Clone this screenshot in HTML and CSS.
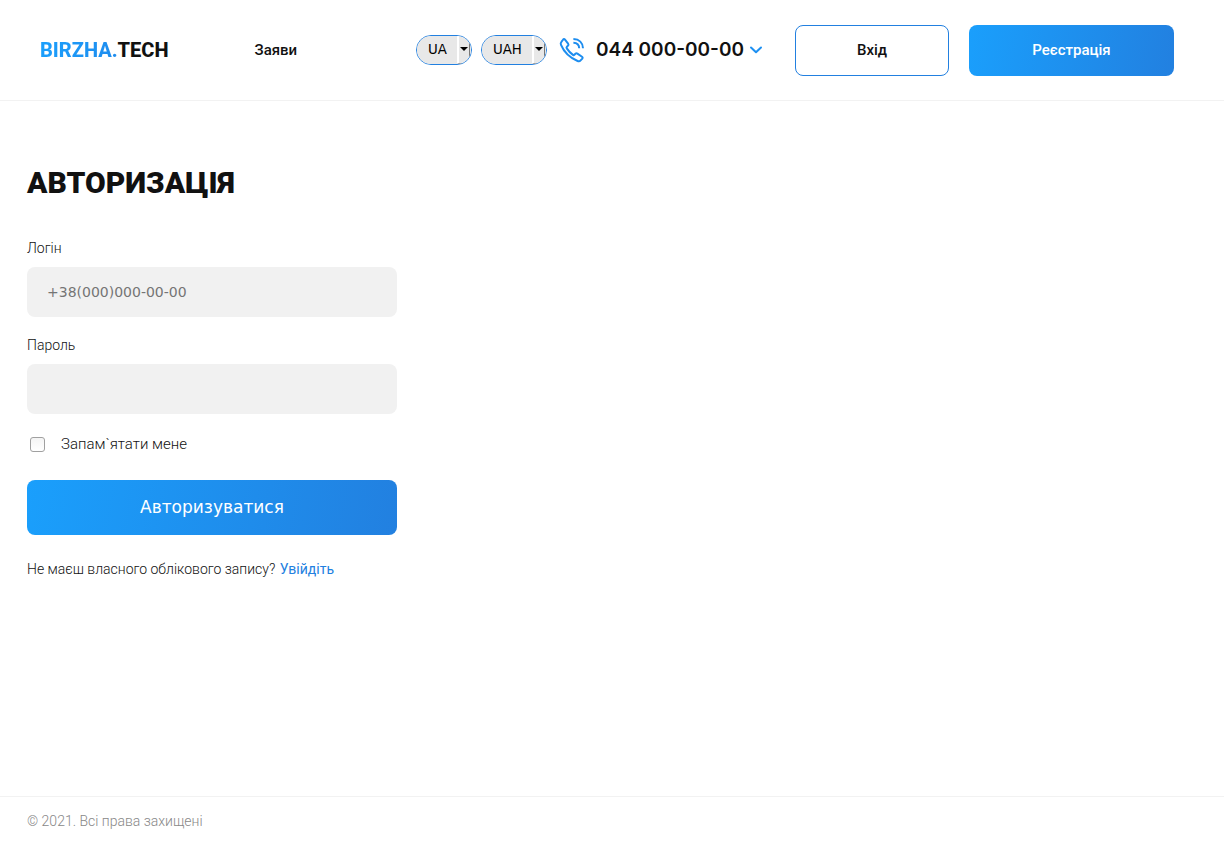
FILE: index.html
```html
<!DOCTYPE html>
<html lang="uk">
<head>
<meta charset="utf-8">
<meta name="viewport" content="width=device-width, initial-scale=1">
<title>Авторизація</title>
<link rel="stylesheet" href="styles.css">
</head>
<body>
<header class="header">
  <a class="logo" href="#"><span class="logo-accent">BIRZHA.</span>TECH</a>
  <nav class="nav"><a class="nav-link" href="#">Заяви</a></nav>
  <div class="tools">
    <div class="pickers">
      <span class="picker picker-lang">
        <select class="picker-select" aria-label="Мова"><option>UA</option><option>RU</option></select>
        <span class="picker-arrow"></span>
      </span>
      <span class="picker picker-currency">
        <select class="picker-select" aria-label="Валюта"><option>UAH</option><option>USD</option></select>
        <span class="picker-arrow"></span>
      </span>
    </div>
    <a class="phone" href="tel:0440000000">
      <svg class="phone-icon" viewBox="0 0 26 26" fill="none" stroke="#1d8def" stroke-width="2" stroke-linecap="round" stroke-linejoin="round" aria-hidden="true">
        <path d="M5.8 2.4 9.1 6.6C9.7 7.4 9.6 8.2 8.9 8.8L7.9 9.7C7.4 10.2 7.4 10.8 7.8 11.4 9.3 13.8 11.4 16 14 17.9 14.5 18.3 15 18.2 15.4 17.8L16.4 16.8C17 16.2 17.7 16.1 18.4 16.6L23 19.8C23.8 20.4 23.8 21 23.3 21.6L21.6 23.4C20.8 24.3 19.8 24.5 18.6 24 10.6 20.6 5.1 15.4 2 7.9 1.5 6.7 1.6 5.7 2.4 4.8L4.2 2.5C4.7 1.9 5.3 1.8 5.8 2.4Z"/>
        <path d="M14.4 2C20.2 2.2 23.8 5.8 24 11.2M14.4 5.8C18 5.9 20.1 8 20.2 11.2" stroke-linecap="butt"/>
      </svg>
      <span class="phone-number">044 000-00-00</span>
      <svg class="phone-chevron" viewBox="0 0 14 8" fill="none" stroke="#1d90f2" stroke-width="2" stroke-linecap="round" stroke-linejoin="round" aria-hidden="true"><path d="M2 1.5 7 6.3 12 1.5"/></svg>
    </a>
  </div>
  <div class="account">
    <button class="button button-outline" type="button">Вхід</button>
    <button class="button button-filled" type="button">Реєстрація</button>
  </div>
</header>
<main class="main">
  <h1 class="title">АВТОРИЗАЦІЯ</h1>
  <form class="form">
    <label class="label" for="login">Логін</label>
    <input class="field" id="login" type="tel" placeholder="+38(000)000-00-00">
    <label class="label" for="password">Пароль</label>
    <input class="field" id="password" type="password">
    <label class="remember" for="remember"><input class="checkbox" id="remember" type="checkbox">Запам`ятати мене</label>
    <button class="submit" type="submit">Авторизуватися</button>
  </form>
  <p class="hint">Не маєш власного облікового запису? <a class="hint-link" href="#">Увійдіть</a></p>
</main>
<footer class="footer">© 2021. Всі права захищені</footer>
</body>
</html>
```
FILE: styles.css
```css
* {
  box-sizing: border-box;
}

body {
  display: flex;
  flex-direction: column;
  min-height: 100vh;
  margin: 0;
  background: #fff;
  color: #111;
  font-family: Roboto, sans-serif;
  font-size: 14px;
  line-height: 20px;
}

a {
  color: inherit;
  text-decoration: none;
}

.header {
  display: flex;
  align-items: center;
  padding: 25px 50px 24px 40px;
  border-bottom: 1px solid #f2f2f2;
}

.logo,
.nav,
.tools {
  margin-bottom: 2px;
}

.logo {
  font-size: 20px;
  font-weight: 800;
}

.logo-accent {
  background: linear-gradient(100deg, #1a9ffc, #1f8cee);
  background-clip: text;
  color: transparent;
}

.nav {
  flex: 1;
  padding-left: 86px;
}

.nav-link {
  font-size: 15px;
  font-weight: 500;
}

.tools {
  display: flex;
  align-items: center;
  gap: 12px;
  margin-right: 32px;
}

.pickers {
  display: flex;
  gap: 9px;
}

.picker {
  position: relative;
  height: 30px;
  overflow: hidden;
  border: 1px solid #2280e0;
  border-radius: 15px;
}

.picker-lang {
  width: 56px;
}

.picker-currency {
  width: 66px;
}

.picker-select {
  width: 100%;
  height: 100%;
  padding: 0 11px;
  border: 0;
  background: #e8e8e8;
  color: #000;
  appearance: none;
  font-family: "DejaVu Sans", sans-serif;
}

.picker-arrow {
  position: absolute;
  inset: 0 1px 0 auto;
  display: grid;
  place-items: center;
  width: 13px;
  border: solid;
  border-width: 0 1px 1px 2px;
  border-color: #fff #777 #888 #fff;
  pointer-events: none;
}

.picker-arrow::before {
  content: "";
  border: 4px solid transparent;
  border-top-color: #000;
  border-bottom: 0;
}

.phone {
  display: flex;
  align-items: center;
}

.phone-icon {
  width: 26px;
  height: 26px;
  margin-right: 11px;
}

.phone-number {
  font-family: Inter, sans-serif;
  font-size: 19px;
  font-weight: 600;
}

.phone-chevron {
  width: 14px;
  height: 8px;
  margin-left: 5px;
}

.account {
  display: flex;
  gap: 20px;
}

.button {
  height: 51px;
  padding-bottom: 3px;
  border-radius: 8px;
  font-family: inherit;
  font-size: 15px;
  font-weight: 500;
}

.button-outline {
  width: 154px;
  border: 1px solid #2280e0;
  background: #fff;
  color: #111;
}

.button-filled {
  width: 205px;
  border: 0;
  background: linear-gradient(100deg, #1a9ffc, #2280e0);
  color: #fff;
}

.main {
  flex: 1;
  padding: 62px 27px 40px;
}

.title {
  margin: 0 0 35px;
  font-size: 30px;
  font-weight: 900;
  line-height: 40px;
}

.form {
  display: flex;
  flex-direction: column;
  max-width: 370px;
}

.label {
  margin-bottom: 9px;
  font-weight: 300;
}

.field {
  height: 50px;
  margin-bottom: 18px;
  padding: 0 20px;
  border: 0;
  border-radius: 8px;
  background: #f1f1f1;
  font-family: "DejaVu Sans", sans-serif;
  font-size: 14px;
}

.field::placeholder {
  color: #757575;
}

.remember {
  display: flex;
  align-items: center;
  gap: 16px;
  margin: 2px 0 26px;
  padding-left: 3px;
  font-size: 15px;
  font-weight: 300;
}

.checkbox {
  width: 15px;
  height: 15px;
  margin: 0;
  border: 1px solid #a0a0a0;
  border-radius: 3px;
  background: linear-gradient(#f4f4f4, #fff);
  appearance: none;
}

.checkbox:checked {
  background: #2280e0;
}

.submit {
  height: 55px;
  padding-bottom: 3px;
  border: 0;
  border-radius: 8px;
  background: linear-gradient(100deg, #1a9ffc, #2280e0);
  color: #fff;
  font-family: "DejaVu Sans", sans-serif;
  font-size: 17px;
}

.hint {
  margin: 24px 0 0;
  font-weight: 300;
}

.hint-link {
  margin-left: 1px;
  color: #2280e0;
  font-weight: 400;
}

.footer {
  padding: 14px 27px 16px;
  border-top: 1px solid #f2f2f2;
  color: #888;
  font-weight: 300;
}
```
